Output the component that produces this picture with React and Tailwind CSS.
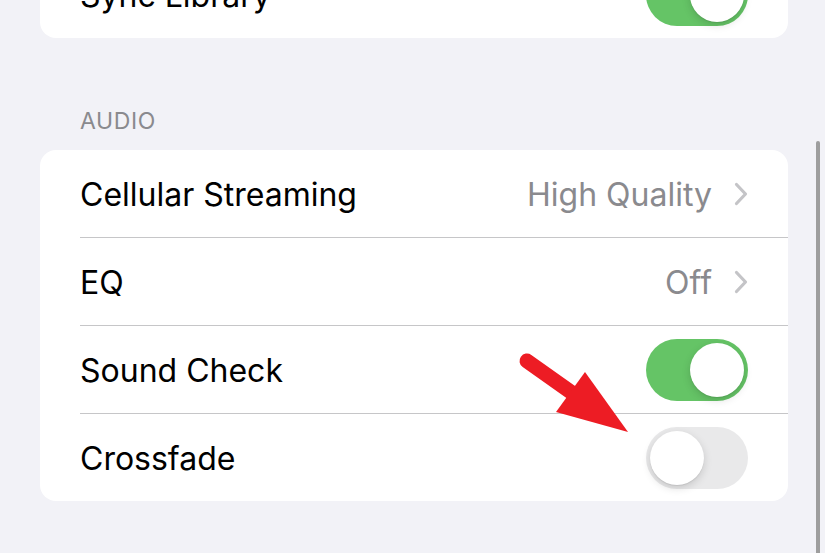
import React from "react";

const Toggle = ({ on }) => (
  <div
    className={`relative w-[102px] h-[62px] rounded-full flex items-center px-[4px] ${
      on ? "bg-[#65c466] justify-end" : "bg-[#e9e9ea] justify-start"
    }`}
  >
    <div className="w-[54px] h-[54px] rounded-full bg-white shadow-[0_3px_8px_rgba(0,0,0,0.15),0_1px_1px_rgba(0,0,0,0.08)]" />
  </div>
);

const Chevron = () => (
  <svg width="14" height="24" viewBox="0 0 14 24" fill="none">
    <path
      d="M2.5 2.5 L11.5 12 L2.5 21.5"
      stroke="#c4c4c7"
      strokeWidth="3.2"
      strokeLinecap="round"
      strokeLinejoin="round"
    />
  </svg>
);

const Row = ({ label, value, toggle, last }) => (
  <div className="pl-10">
    <div
      className={`flex items-center justify-between pr-10 ${
        last ? "h-[87px]" : "h-[88px] border-b border-[#c6c6c8]"
      }`}
    >
      <span className="text-[32px] leading-[40px] pt-[3px] text-black">{label}</span>
      {toggle !== undefined ? (
        <Toggle on={toggle} />
      ) : (
        <div className="flex items-center gap-[22px]">
          <span className="text-[32px] leading-[40px] pt-[3px] text-[#8a8a8e]">{value}</span>
          <Chevron />
        </div>
      )}
    </div>
  </div>
);

export default function App() {
  return (
    <div
      className="relative h-[553px] w-[825px] overflow-hidden bg-[#f2f2f7]"
      style={{ fontFamily: "Inter, 'Noto Sans', sans-serif" }}
    >
      <div className="pl-10 pr-[37px]">
        {/* top card, scrolled mostly out of view */}
        <div className="mt-[-49px] bg-white rounded-2xl">
          <Row label="Sync Library" toggle={true} last />
        </div>

        <div className="h-[112px] flex items-end pb-[15px] pl-10">
          <span className="text-[23px] leading-[28px] text-[#8a8a8e] tracking-[0.6px]">
            AUDIO
          </span>
        </div>

        <div className="bg-white rounded-2xl">
          <Row label="Cellular Streaming" value="High Quality" />
          <Row label="EQ" value="Off" />
          <Row label="Sound Check" toggle={true} />
          <Row label="Crossfade" toggle={false} last />
        </div>
      </div>

      {/* scroll indicator */}
      <div className="absolute left-[816px] top-[141px] w-[4px] h-[430px] rounded-full bg-[#9e9e9e]" />

      {/* annotation arrow */}
      <svg className="absolute left-0 top-0" width="825" height="553">
        <line
          x1="527"
          y1="361"
          x2="575"
          y2="395"
          stroke="#ed1c24"
          strokeWidth="15"
          strokeLinecap="round"
        />
        <polygon points="585,372 556,412 628,432" fill="#ed1c24" />
      </svg>
    </div>
  );
}
